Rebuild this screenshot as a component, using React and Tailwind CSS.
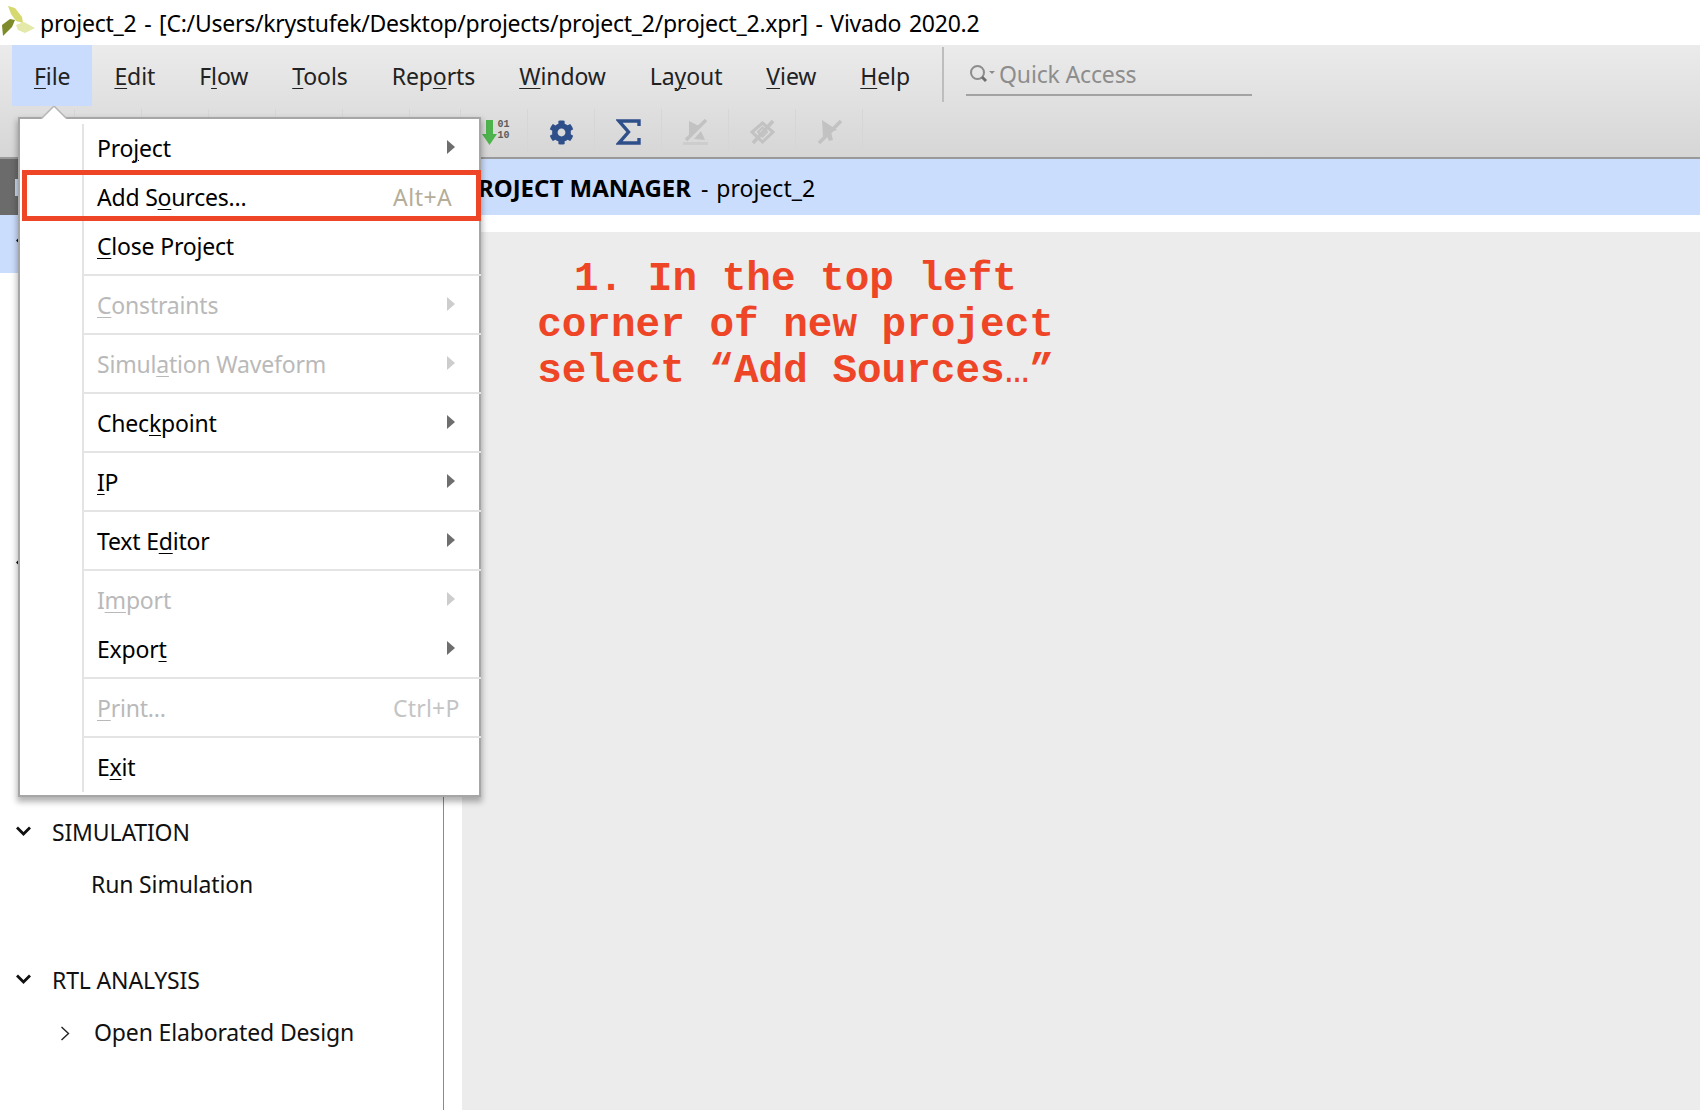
import React from "react";
import { FaCog } from "react-icons/fa";

const uiFont = "font-['Noto_Sans',sans-serif]";

// label with the accelerator letter underlined
const Mnemonic = ({ text, at }) => (
  <span>
    {text.slice(0, at)}
    <u className="underline decoration-1 underline-offset-[3px]">{text[at]}</u>
    {text.slice(at + 1)}
  </span>
);

const menuBar = [
  ["File", 0],
  ["Edit", 0],
  ["Flow", 1],
  ["Tools", 0],
  ["Reports", 3],
  ["Window", 0],
  ["Layout", 2],
  ["View", 0],
  ["Help", 0],
];

const fileMenu = [
  { label: "Project", at: 3, arrow: true },
  { label: "Add Sources…", at: 5 },
  { label: "Close Project", at: 0, sep: true },
  { label: "Constraints", at: 0, arrow: true, off: true, sep: true },
  { label: "Simulation Waveform", at: 5, arrow: true, off: true, sep: true },
  { label: "Checkpoint", at: 4, arrow: true, sep: true },
  { label: "IP", at: 0, arrow: true, sep: true },
  { label: "Text Editor", at: 6, arrow: true, sep: true },
  { label: "Import", at: 1, arrow: true, off: true },
  { label: "Export", at: 5, arrow: true, sep: true },
  { label: "Print…", at: 0, off: true, sep: true },
  { label: "Exit", at: 1 },
];

const Arrow = ({ off }) => (
  <svg width="8" height="14" viewBox="0 0 8 14" className="ml-auto mr-[24px] mb-[3px] shrink-0">
    <path d="M0 0L8 7L0 14Z" fill={off ? "#cdcdcd" : "#6e6e6e"} />
  </svg>
);

const MenuRow = ({ item }) => (
  <>
    <div className={`flex items-center h-[49px] pl-[13px] ${item.off ? "text-[#b9b9b9]" : "text-black"}`}>
      <div className="w-[296px] shrink-0 tracking-[-0.2px]">
        <Mnemonic text={item.label} at={item.at} />
      </div>
      {item.label === "Add Sources…" && <span className="text-[#b5ad98] tracking-[0.5px]">Alt+A</span>}
      {item.label === "Print…" && <span className="text-[#c4c4c4] tracking-[0.2px]">Ctrl+P</span>}
      {item.arrow && <Arrow off={item.off} />}
    </div>
    {item.sep && (
      <div className="flex items-start pt-[3px] h-[10px] -mr-[2px] relative z-10">
        <div className="h-[2px] w-full bg-[#e4e4e4]" />
      </div>
    )}
  </>
);

const FileMenu = () => (
  <div className="absolute left-[18px] top-[117px] w-[463px] h-[680px] bg-white border-2 border-[#a6a6a6] shadow-[0_4px_6px_1px_rgba(0,0,0,0.3)] z-20 pt-[5px]">
    {/* caret under the File button */}
    <svg width="26" height="13" viewBox="0 0 26 13" className="absolute left-[21px] -top-[13px]">
      <path d="M0 13L13 0L26 13Z" fill="#ffffff" />
      <path d="M0 13L13 0L26 13" fill="none" stroke="#b5b5b5" strokeWidth="1.5" />
    </svg>
    <div className="ml-[62px] h-[668px] border-l-2 border-[#e4e4e4] text-[23px] leading-none">
      {fileMenu.map((item) => (
        <MenuRow key={item.label} item={item} />
      ))}
    </div>
    {/* highlight drawn over the tutorial step */}
    <div className="absolute left-[2px] top-[51px] w-[459px] h-[51px] border-[5px] border-[#ef4527] z-20" />
  </div>
);

const XilinxLogo = () => (
  <svg width="33" height="31" viewBox="0 0 33 31" className="absolute left-[2px] top-[5px]">
    <path d="M6 1L13 3L20 12L21 18L14 16L9 9Z" fill="#d5d96f" />
    <path d="M0 20L8 14L13 15L10 22L1 31Z" fill="#7f8a2b" />
    <path d="M14 20L22 17L33 23L23 28L16 25Z" fill="#e4e8a8" />
  </svg>
);

const SearchIcon = () => (
  <svg width="26" height="18" viewBox="0 0 26 18" className="shrink-0 mb-[3px]">
    <circle cx="7.5" cy="7.5" r="6.5" fill="none" stroke="#8c8c8c" strokeWidth="2" />
    <path d="M12 12L16 16" stroke="#6f6f6f" strokeWidth="3" />
    <path d="M19 6H25L22 9Z" fill="#8c8c8c" />
  </svg>
);

const DownloadBits = () => (
  <div className="flex items-start ml-[4px]">
    <svg width="15" height="25" viewBox="0 0 15 25" className="shrink-0">
      <path d="M4 0H11V14H15L7.5 25L0 14H4Z" fill="#4fb34d" />
    </svg>
    <div className="font-['Liberation_Mono',monospace] font-bold text-[10px] leading-[11.5px] text-[#5d5d5d] -mt-[1px]">
      <div>01</div>
      <div>10</div>
    </div>
  </div>
);

const SigmaIcon = () => (
  <svg width="25" height="26" viewBox="0 0 25 26">
    <path d="M23 7V2H3L12.5 13L3 24H23V19" fill="none" stroke="#2f4f8a" strokeWidth="3.4" />
  </svg>
);

const FlagOffIcon = () => (
  <svg width="25" height="26" viewBox="0 0 25 26">
    <path d="M6 2L18 8L6 16Z" fill="#c2c2c2" />
    <path d="M11 20L18 12L22 21Z" fill="#c2c2c2" />
    <path d="M0 23H25V26H0Z" fill="#cdcdcd" />
    <path d="M23 1L3 21" stroke="#c2c2c2" strokeWidth="3.5" />
  </svg>
);

const LinkOffIcon = () => (
  <svg width="25" height="26" viewBox="0 0 25 26">
    <path d="M12.5 4L23 13L12.5 23L2 13Z" fill="none" stroke="#c2c2c2" strokeWidth="3" />
    <path d="M8 13L12.5 8.5L17 13L12.5 17.5Z" fill="none" stroke="#c2c2c2" strokeWidth="2" />
    <path d="M23 2L3 24" stroke="#c2c2c2" strokeWidth="3.5" />
  </svg>
);

const CursorOffIcon = () => (
  <svg width="25" height="26" viewBox="0 0 25 26">
    <path d="M5 1L20 11L14 13L16 21L12 22L9 15L6 18Z" fill="#c2c2c2" />
    <path d="M24 2L2 24" stroke="#c2c2c2" strokeWidth="3.5" />
  </svg>
);

// toolbar cells; the first ones only peek out above the menu
const ToolCell = ({ wide, narrow, children }) => (
  <div
    className={`flex items-center justify-center pt-[4px] h-[42px] border-r border-[#d6d6d6] shrink-0 ${
      narrow ? "w-[51px]" : wide ? "w-[75px]" : "w-[67px]"
    }`}
  >
    {children}
  </div>
);

const Toolbar = () => (
  <div className="flex items-start pt-[3px]">
    <ToolCell wide />
    <ToolCell />
    <ToolCell />
    <ToolCell />
    <ToolCell />
    <ToolCell />
    <ToolCell narrow />
    <ToolCell>
      <DownloadBits />
    </ToolCell>
    <ToolCell>
      <FaCog className="text-[25px] text-[#2f4f8a]" />
    </ToolCell>
    <ToolCell>
      <SigmaIcon />
    </ToolCell>
    <ToolCell>
      <FlagOffIcon />
    </ToolCell>
    <ToolCell>
      <LinkOffIcon />
    </ToolCell>
    <ToolCell>
      <CursorOffIcon />
    </ToolCell>
  </div>
);

const ChevronDown = () => (
  <svg width="15" height="10" viewBox="0 0 15 10" className="shrink-0">
    <path d="M1 1.5L7.5 8L14 1.5" fill="none" stroke="#111111" strokeWidth="2.8" />
  </svg>
);

const ChevronRight = () => (
  <svg width="10" height="15" viewBox="0 0 10 15" className="shrink-0">
    <path d="M1.5 1L8.5 7.5L1.5 14" fill="none" stroke="#222222" strokeWidth="1.4" />
  </svg>
);

const SectionRow = ({ label }) => (
  <div className="flex items-center h-[54px] pl-[16px]">
    <ChevronDown />
    <span className="ml-[21px] mt-[2px]">{label}</span>
  </div>
);

const Sidebar = () => (
  <aside className="w-[444px] shrink-0 border-r border-[#8a8a8a] flex flex-col tracking-[-0.15px]">
    <div className="h-[56px] bg-[#6b6b6b] flex items-center">
      <div className="ml-[15px] w-[4px] h-[17px] bg-[#c9d9ef]" />
    </div>
    <div className="h-[58px] bg-[#cbddfd] flex items-center pl-[16px] pb-[3px]">
      <ChevronDown />
    </div>
    <div className="h-[265px]" />
    <div className="h-[54px] flex items-center pl-[16px]">
      <ChevronDown />
    </div>
    <div className="h-[212px]" />
    <SectionRow label="SIMULATION" />
    <div className="flex items-center h-[54px] pl-[91px] pb-[2px]">Run Simulation</div>
    <div className="h-[40px]" />
    <SectionRow label="RTL ANALYSIS" />
    <div className="flex items-center h-[54px] pl-[60px]">
      <ChevronRight />
      <span className="ml-[24px] mb-[2px]">Open Elaborated Design</span>
    </div>
  </aside>
);

const Workspace = () => (
  <main className="flex-1 flex flex-col min-w-0">
    <div className="h-[56px] bg-[#cbddfd] flex items-center pl-[19px] pt-[2px] shrink-0">
      <span className="font-bold text-[24px] text-black">PROJECT MANAGER</span>
      <span className="ml-[10px] [word-spacing:2px] text-black">- project_2</span>
    </div>
    <div className="flex-1 mt-[17px] ml-[18px] bg-[#ececec] pt-[24px] pl-[75px]">
      <div className="w-[517px] font-['Liberation_Mono',monospace] font-bold text-[41px] leading-[46px] text-[#ef4527] text-center whitespace-nowrap">
        <div>1. In the top left</div>
        <div>corner of new project</div>
        <div>
          select “Add Sources<span className="font-normal">…</span>”
        </div>
      </div>
    </div>
  </main>
);

export default function App() {
  return (
    <div className={`relative w-[1700px] h-[1110px] overflow-hidden bg-white text-[#111111] text-[23px] leading-none ${uiFont}`}>
      <div className="h-[45px] flex items-center pl-[40px] pt-[2px] text-black tracking-[-0.25px] [word-spacing:2px]">
        <XilinxLogo />
        <span>project_2 - [C:/Users/krystufek/Desktop/projects/project_2/project_2.xpr] - Vivado 2020.2</span>
      </div>

      <div className="h-[114px] bg-gradient-to-b from-[#ebebeb] to-[#d6d6d6] border-b-2 border-[#999999]">
        <div className="flex h-[61px] items-stretch pl-[12px]">
          {menuBar.map(([name, at], i) => (
            <div key={name} className={`flex items-center px-[22px] pt-[2px] text-[#222222] tracking-[-0.1px] ${i === 0 ? "bg-[#c9dcfd]" : ""}`}>
              <Mnemonic text={name} at={at} />
            </div>
          ))}
          <div className="w-[2px] h-[55px] mt-[2px] ml-[10px] bg-[#bdbdbd]" />
          <div className="ml-[22px] w-[286px] h-[51px] flex items-end gap-[3px] pl-[4px] pb-[8px] border-b-2 border-[#a3a3a3] text-[#8d8d8d] tracking-[-0.15px]">
            <SearchIcon />
            <span>Quick Access</span>
          </div>
        </div>
        <Toolbar />
      </div>

      <div className="flex h-[951px]">
        <Sidebar />
        <Workspace />
      </div>

      <FileMenu />
    </div>
  );
}
